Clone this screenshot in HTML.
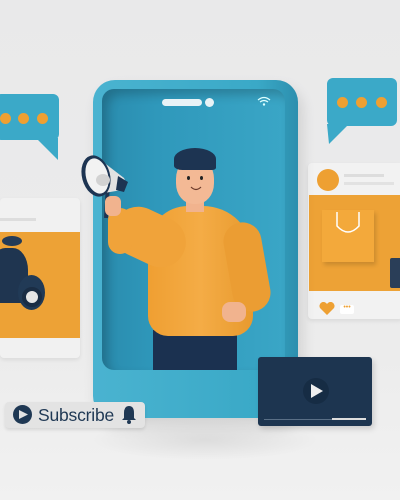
<!DOCTYPE html>
<html><head><meta charset="utf-8"><style>
*{margin:0;padding:0;box-sizing:border-box}
body{width:400px;height:500px;overflow:hidden;background:linear-gradient(#e9e9ea,#ececec 70%,#f1f1f1);position:relative;font-family:"Liberation Sans",sans-serif}
.a{position:absolute}
.dot{position:absolute;width:11px;height:11px;border-radius:50%;background:#eea032}
</style></head><body>
<div class="a" style="left:90px;top:420px;width:230px;height:40px;border-radius:50%;background:radial-gradient(rgba(0,0,0,.08),rgba(0,0,0,0) 70%)"></div>

<div class="a" style="left:-5px;top:94px;width:64px;height:46px;background:#3ba9c8;border-radius:6px"></div>
<svg class="a" style="left:36px;top:138px" width="24" height="24"><path d="M0 0H22V22Z" fill="#3ba9c8"/></svg>
<div class="dot" style="left:0;top:113px"></div><div class="dot" style="left:18px;top:113px"></div><div class="dot" style="left:37px;top:113px"></div>

<div class="a" style="left:327px;top:78px;width:70px;height:48px;background:#3ba9c8;border-radius:6px"></div>
<svg class="a" style="left:327px;top:124px" width="24" height="22"><path d="M0 0H22L2 20Z" fill="#3ba9c8"/></svg>
<div class="dot" style="left:337px;top:97px"></div><div class="dot" style="left:356px;top:97px"></div><div class="dot" style="left:376px;top:97px"></div>

<div class="a" style="left:0;top:198px;width:80px;height:160px;background:#f1f1f1;border-radius:4px;box-shadow:0 2px 4px rgba(0,0,0,.08)"></div>
<div class="a" style="left:0;top:218px;width:36px;height:3px;background:#ddd"></div>
<div class="a" style="left:0;top:232px;width:80px;height:106px;background:#eda236"></div>
<div class="a" style="left:-10px;top:248px;width:38px;height:55px;background:#1f3550;border-radius:40% 40% 20% 20%"></div>
<div class="a" style="left:18px;top:275px;width:27px;height:35px;background:#213a56;border-radius:50%"></div>
<div class="a" style="left:22px;top:287px;width:20px;height:20px;border-radius:50%;background:#e6e6e6;border:4px solid #1a2d44"></div>
<div class="a" style="left:2px;top:236px;width:20px;height:10px;background:#243b57;border-radius:50%"></div>

<div class="a" style="left:308px;top:163px;width:95px;height:156px;background:#f2f2f2;border-radius:4px;box-shadow:0 2px 4px rgba(0,0,0,.08)"></div>
<div class="a" style="left:317px;top:169px;width:22px;height:22px;border-radius:50%;background:#eea032"></div>
<div class="a" style="left:344px;top:174px;width:40px;height:3px;background:#ddd"></div>
<div class="a" style="left:344px;top:182px;width:50px;height:3px;background:#e2e2e2"></div>
<div class="a" style="left:309px;top:195px;width:91px;height:96px;background:#eda236"></div>
<div class="a" style="left:322px;top:210px;width:52px;height:52px;background:#f3a93b;box-shadow:2px 3px 4px rgba(0,0,0,.15)"></div>
<svg class="a" style="left:334px;top:212px" width="28" height="26"><path d="M3 0V14Q14 26 25 14V0" fill="none" stroke="#fff" stroke-width="1.5"/></svg>
<div class="a" style="left:390px;top:258px;width:12px;height:30px;background:#2a3e58;border-radius:2px"></div>
<svg class="a" style="left:319px;top:302px" width="16" height="14"><path d="M8 13L1 6A3.5 3.5 0 0 1 8 2A3.5 3.5 0 0 1 15 6Z" fill="#eea032"/></svg>
<div class="a" style="left:340px;top:305px;width:14px;height:9px;background:#fff;border-radius:2px;font-size:7px;color:#eea032;line-height:6px;text-align:center">•••</div>

<div class="a" style="left:93px;top:80px;width:205px;height:338px;background:linear-gradient(90deg,#4ab3d0,#3aa9c7 80%,#2c8fae);border-radius:22px;box-shadow:4px 8px 14px rgba(0,0,0,.12)"></div>
<div class="a" style="left:102px;top:89px;width:183px;height:281px;background:linear-gradient(90deg,#2a8cae,#2f98bb 30%,#3aa6c6);border-radius:12px;box-shadow:inset 6px 6px 10px rgba(0,0,0,.2)"></div>
<div class="a" style="left:162px;top:99px;width:40px;height:7px;background:#e8f2f6;border-radius:4px"></div>
<div class="a" style="left:205px;top:98px;width:9px;height:9px;background:#e8f2f6;border-radius:50%"></div>
<svg class="a" style="left:257px;top:96px" width="14" height="10"><path d="M1 4Q7 -1 13 4M3 6Q7 3 11 6" fill="none" stroke="#dff" stroke-width="1.2"/><circle cx="7" cy="8.5" r="1.2" fill="#dff"/></svg>

<div class="a" style="left:153px;top:330px;width:84px;height:40px;background:#1b3150"></div>
<div class="a" style="left:148px;top:206px;width:105px;height:130px;background:linear-gradient(90deg,#ef9f32,#f4ac46 50%,#e89a2e);border-radius:40px 50px 20px 20px"></div>
<div class="a" style="left:112px;top:212px;width:75px;height:50px;background:#f0a33a;border-radius:28px;transform:rotate(25deg)"></div>
<div class="a" style="left:108px;top:208px;width:24px;height:46px;background:#f0a33a;border-radius:12px"></div>
<div class="a" style="left:228px;top:222px;width:38px;height:90px;background:#eb9d33;border-radius:20px;transform:rotate(-10deg)"></div>
<div class="a" style="left:222px;top:302px;width:24px;height:20px;background:#f1b38e;border-radius:8px"></div>
<div class="a" style="left:186px;top:198px;width:18px;height:14px;background:#f1b38e"></div>
<div class="a" style="left:176px;top:158px;width:38px;height:46px;background:#f3b995;border-radius:45%"></div>
<div class="a" style="left:174px;top:148px;width:42px;height:22px;background:#1d3452;border-radius:50% 50% 10% 20%"></div>
<div class="a" style="left:187px;top:176px;width:3px;height:4px;background:#222;border-radius:50%"></div>
<div class="a" style="left:200px;top:176px;width:3px;height:4px;background:#222;border-radius:50%"></div>
<svg class="a" style="left:190px;top:186px" width="12" height="6"><path d="M1 1Q6 6 11 1" fill="none" stroke="#6a3a2a" stroke-width="1.2"/></svg>
<!-- megaphone -->
<svg class="a" style="left:78px;top:148px" width="56" height="72">
  <path d="M30 36L28 70" stroke="#1d3452" stroke-width="4"/>
  <path d="M20 10L46 30Q50 38 44 42L20 46Z" fill="#e2e2e2"/>
  <path d="M40 28L50 34L46 44L38 42Z" fill="#1d3452"/>
  <ellipse cx="18" cy="28" rx="14" ry="21" transform="rotate(-15 18 28)" fill="#1d3452"/>
  <ellipse cx="19" cy="28" rx="11" ry="18" transform="rotate(-15 19 28)" fill="#f2f2f2"/>
  <ellipse cx="25" cy="32" rx="7" ry="6" fill="#d2d2d2"/>
</svg>
<div class="a" style="left:105px;top:196px;width:16px;height:20px;background:#f1b38e;border-radius:6px"></div>

<div class="a" style="left:258px;top:357px;width:114px;height:69px;background:#1d3550;border-radius:3px;box-shadow:2px 3px 6px rgba(0,0,0,.15)"></div>
<div class="a" style="left:303px;top:378px;width:26px;height:26px;border-radius:50%;background:#162c44"></div>
<svg class="a" style="left:309px;top:383px" width="16" height="16"><path d="M2 1L14 8L2 15Z" fill="#eee"/></svg>
<div class="a" style="left:264px;top:419px;width:102px;height:1px;background:#5a6f86"></div>
<div class="a" style="left:332px;top:418px;width:34px;height:2px;background:#ddd"></div>

<div class="a" style="left:5px;top:402px;width:140px;height:26px;background:#e3e3e3;border-radius:4px;box-shadow:0 2px 3px rgba(0,0,0,.1)"></div>
<div class="a" style="left:13px;top:405px;width:19px;height:19px;border-radius:50%;background:#1f3854"></div>
<svg class="a" style="left:18px;top:409px" width="11" height="11"><path d="M1 1L10 5.5L1 10Z" fill="#e3e3e3"/></svg>
<div class="a" style="left:38px;top:403px;font-size:17.5px;color:#1f3854;line-height:24px;letter-spacing:-.2px">Subscribe</div>
<svg class="a" style="left:121px;top:405px" width="16" height="19"><path d="M8 1Q3 1 3 8V13L1 15H15L13 13V8Q13 1 8 1Z" fill="#1f3854"/><circle cx="8" cy="17" r="2" fill="#1f3854"/></svg>
</body></html>
